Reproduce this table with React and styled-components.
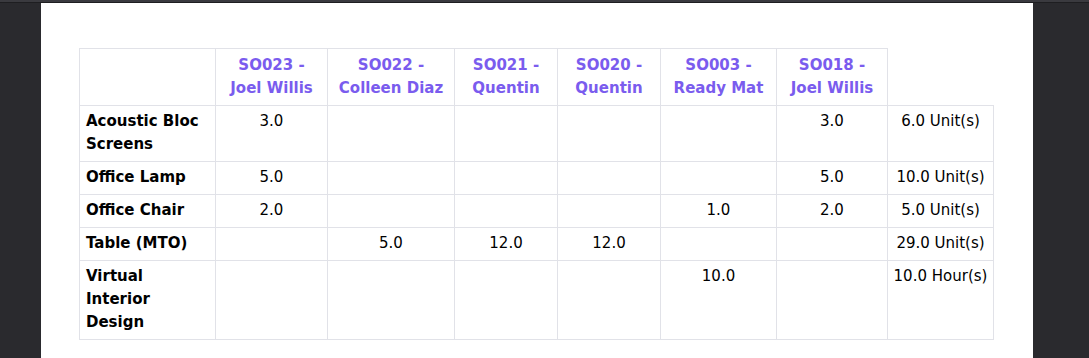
import styled, { createGlobalStyle } from 'styled-components';

const GlobalStyle = createGlobalStyle`
    html, body {
        margin: 0;
        padding: 0;
        background: #2a2a2e;
        font-family: "DejaVu Sans", Verdana, sans-serif;
        font-size: 15px;
    }
`;

const TopBar = styled.div`
    height: 2px;
    background: #3a3a3f;
    border-bottom: 1px solid #1e1e21;
`;

const Viewer = styled.div`
    display: flex;
    padding-left: 41px;
    height: 355px;
    overflow: hidden;
`;

const Sheet = styled.div`
    width: 992px;
    background: #fff;
    box-sizing: border-box;
    padding: 45px 40px 0 38px;
`;

const Table = styled.table`
    border-collapse: collapse;
    table-layout: fixed;
    width: 914px;
    color: #000;
    line-height: 23px;
`;

const Th = styled.th`
    border: 1px solid #e1e2e8;
    padding: 5px 6px;
    vertical-align: top;
    text-align: center;
    font-weight: bold;
    color: #7a5cee;
`;

const Td = styled.td`
    border: 1px solid #e1e2e8;
    padding: 4px 6px 5px;
    vertical-align: top;
    text-align: ${(p) => (p.$label ? 'left' : 'center')};
    font-weight: ${(p) => (p.$label ? 'bold' : 'normal')};
    white-space: ${(p) => (p.$total ? 'nowrap' : 'normal')};
    ${(p) => p.$total && 'padding-left: 2px; padding-right: 2px;'}
`;

const widths = [136, 112, 127, 103, 103, 116, 111, 106];

const orders = [
    ['SO023 -', 'Joel Willis'],
    ['SO022 -', 'Colleen Diaz'],
    ['SO021 -', 'Quentin'],
    ['SO020 -', 'Quentin'],
    ['SO003 -', 'Ready Mat'],
    ['SO018 -', 'Joel Willis'],
];

const rows = [
    { name: 'Acoustic Bloc Screens', qty: ['3.0', '', '', '', '', '3.0'], total: '6.0 Unit(s)' },
    { name: 'Office Lamp', qty: ['5.0', '', '', '', '', '5.0'], total: '10.0 Unit(s)' },
    { name: 'Office Chair', qty: ['2.0', '', '', '', '1.0', '2.0'], total: '5.0 Unit(s)' },
    { name: 'Table (MTO)', qty: ['', '5.0', '12.0', '12.0', '', ''], total: '29.0 Unit(s)' },
    { name: 'Virtual Interior Design', qty: ['', '', '', '', '10.0', ''], total: '10.0 Hour(s)' },
];

export default function App() {
    return (
        <>
            <GlobalStyle />
            <TopBar />
            <Viewer>
                <Sheet>
                    <Table>
                        <colgroup>
                            {widths.map((w, i) => <col key={i} style={{ width: w }} />)}
                        </colgroup>
                        <thead>
                            <tr>
                                <Th></Th>
                                {orders.map(([so, who]) => (
                                    <Th key={so}>{so}<br />{who}</Th>
                                ))}
                            </tr>
                        </thead>
                        <tbody>
                            {rows.map((r) => (
                                <tr key={r.name}>
                                    <Td $label>{r.name}</Td>
                                    {r.qty.map((q, i) => <Td key={i}>{q}</Td>)}
                                    <Td $total>{r.total}</Td>
                                </tr>
                            ))}
                        </tbody>
                    </Table>
                </Sheet>
            </Viewer>
        </>
    );
}
